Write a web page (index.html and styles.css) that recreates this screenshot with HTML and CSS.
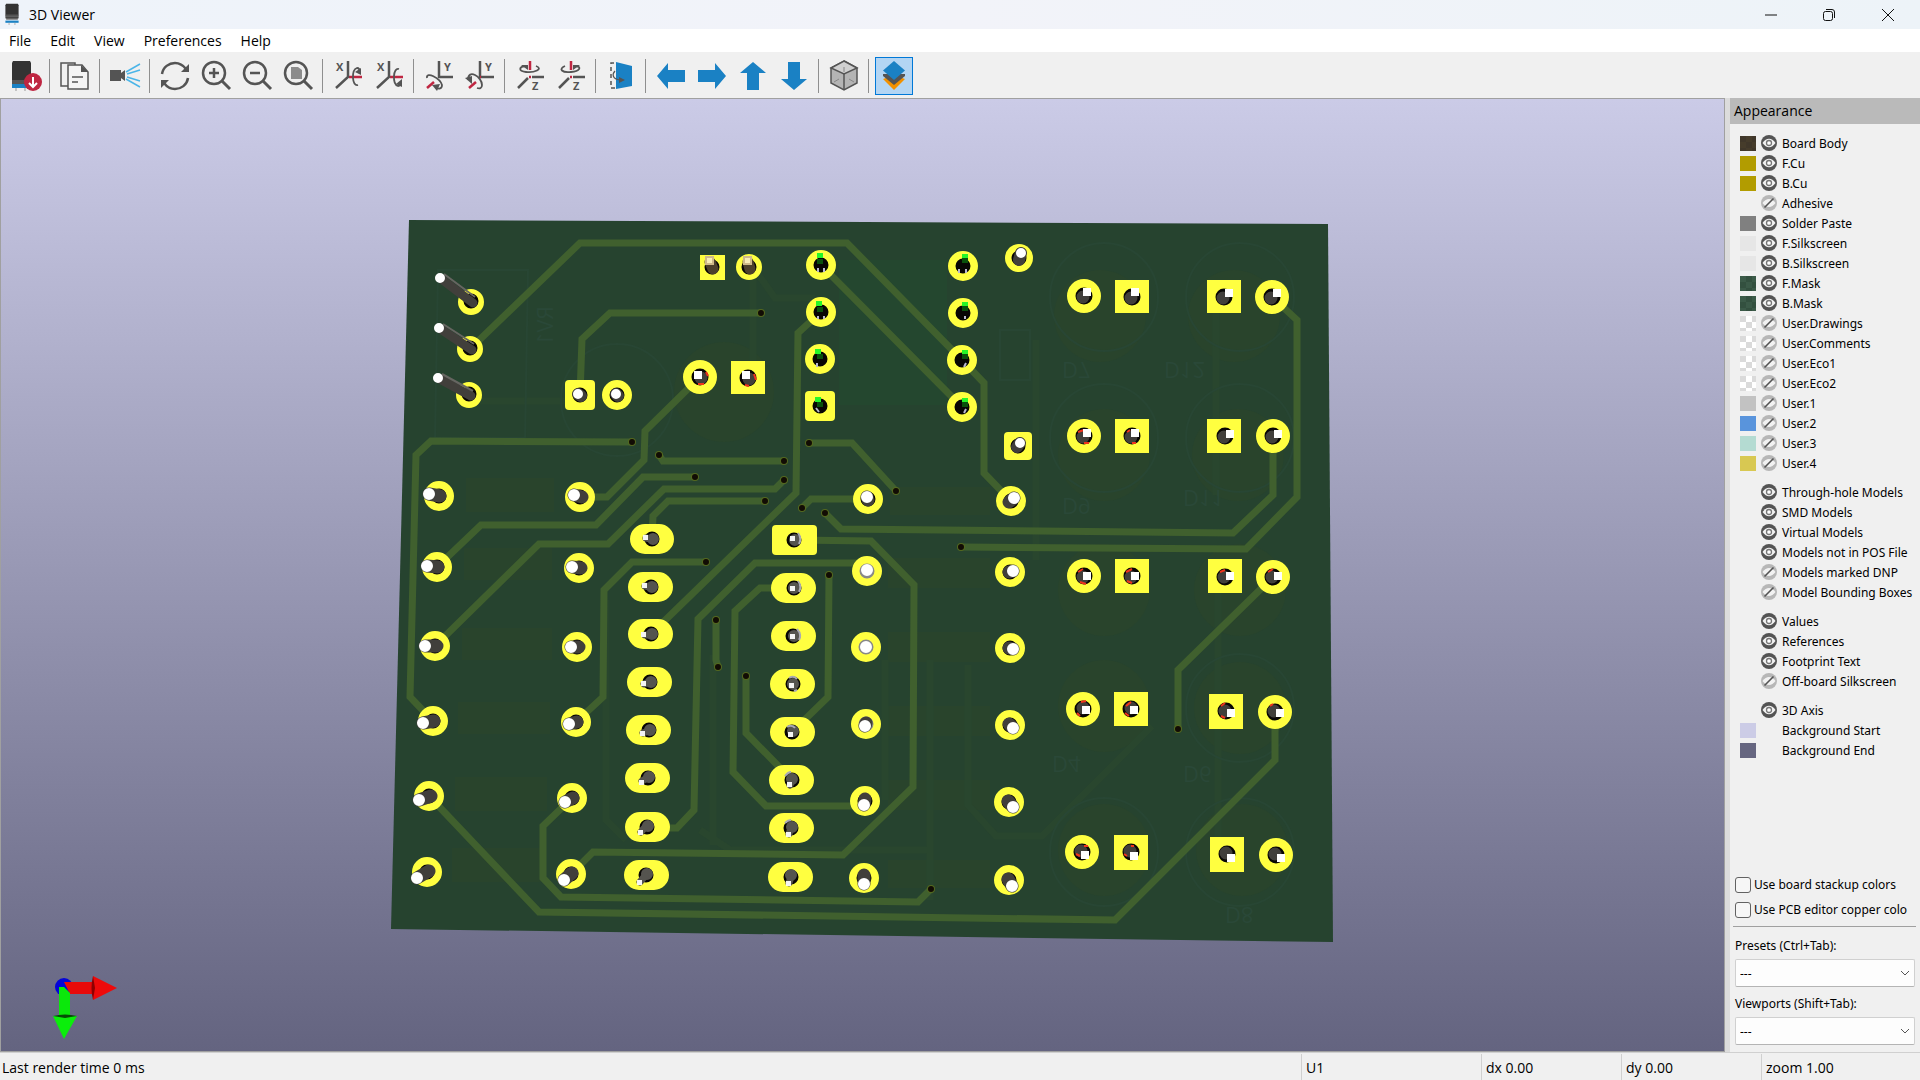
FILE: index.html
```html
<!DOCTYPE html>
<html lang="en">
<head>
<meta charset="utf-8">
<title>3D Viewer</title>
<link rel="stylesheet" href="styles.css">
</head>
<body>
<svg class="defs" aria-hidden="true">
  <symbol id="eye" viewBox="0 0 16 16"><circle cx="8" cy="8" r="8" fill="#545454"/><path d="M1.500 8Q4.500 3.800 8 3.800T14.500 8Q11.500 12.200 8 12.200T1.500 8Z" fill="#f2f2f2"/><circle cx="8" cy="8" r="2.500" fill="#fff" stroke="#777" stroke-width="1.300"/></symbol>
  <symbol id="off" viewBox="0 0 16 16"><circle cx="8" cy="8" r="8" fill="#b7b7b7"/><path d="M1.500 8Q4.500 4 8 4T14.500 8Q11.500 12 8 12T1.500 8Z" fill="#f2f2f2"/><path d="M3.500 12.500L12.500 3.500" stroke="#545454" stroke-width="1.600"/></symbol>
  <symbol id="chip" viewBox="0 0 20 30"><path d="M2 1h16l1 2v15H1V3z" fill="#333"/><path d="M1 16h18v1H1zM2 20h16v3H2z" fill="#777"/><path d="M1 18h18v3H1z" fill="#444"/><path d="M1 24h18v3H1z" fill="#1a81c4"/><path d="M6 27v3M14 27v3" stroke="#999"/></symbol>
</svg>

<header class="titlebar">
  <svg class="app-icon"><use href="#chip"/></svg>
  <h1>3D Viewer</h1>
  <div class="window-buttons">
    <button aria-label="Minimize"><svg viewBox="0 0 14 14"><path d="M1 7h12"/></svg></button>
    <button aria-label="Restore"><svg viewBox="0 0 14 14"><rect x="1.500" y="3.500" width="9" height="9" rx="2"/><path d="M4 1.500h6a2.500 2.500 0 0 1 2.500 2.500v6"/></svg></button>
    <button aria-label="Close"><svg viewBox="0 0 14 14"><path d="M1 1l12 12M13 1L1 13"/></svg></button>
  </div>
</header>

<nav class="menubar">
  <button>File</button><button>Edit</button><button>View</button><button>Preferences</button><button>Help</button>
</nav>

<div class="toolbar" role="toolbar">
  <button aria-label="Reload board"><svg viewBox="0 0 32 32"><path d="M4 1h17l1 2v17H3V3z" fill="#333"/><path d="M3 20h19v5H3z" fill="#555"/><path d="M3 24h16v4H3z" fill="#1a81c4"/><path d="M7 28v3M16 28v3" stroke="#999"/><circle cx="24" cy="22" r="9" fill="#bf2641"/><path d="M24 17v9m-4-3l4 4 4-4" fill="none" stroke="#fff" stroke-width="2"/></svg></button>
  <i class="sep"></i>
  <button aria-label="Copy image"><svg class="line" viewBox="0 0 32 32"><path d="M9 26H2V3h14v3" stroke-width="1.500"/><path d="M9 5h14l6 7v17H9z" fill="#f4f4f4" stroke-width="1.500"/><path d="M22 5l7 7h-7z" fill="#545454" stroke="none"/><path d="M13 17h11M13 22h6" stroke-width="1.500"/></svg></button>
  <i class="sep"></i>
  <button aria-label="Raytracing"><svg viewBox="0 0 32 32"><path d="M1 10h11v3l4-3v11l-4-3v3H1z" fill="#545454"/><path d="M17 12L31 4M18 14l13-4M18 17l13 4M17 19l14 8" stroke="#4bb5e8" stroke-width="1.500"/></svg></button>
  <i class="sep"></i>
  <button aria-label="Redraw"><svg class="line" viewBox="0 0 32 32"><path d="M3 14C4 7 10 3 16 3c5 0 8 2 11 6M29 18c-1 7-7 11-13 11-5 0-8-2-11-6"/><path d="M30 4v8h-8zM2 28v-8h8z" fill="#545454" stroke="none"/></svg></button>
  <button aria-label="Zoom in"><svg class="line" viewBox="0 0 32 32"><circle cx="14" cy="13" r="11"/><path d="M22 21l8 8" stroke-width="3"/><path d="M9 13h10M14 8v10"/></svg></button>
  <button aria-label="Zoom out"><svg class="line" viewBox="0 0 32 32"><circle cx="14" cy="13" r="11"/><path d="M22 21l8 8" stroke-width="3"/><path d="M9 13h10"/></svg></button>
  <button aria-label="Zoom to fit"><svg class="line" viewBox="0 0 32 32"><circle cx="14" cy="13" r="11"/><path d="M22 21l8 8" stroke-width="3"/><path d="M9 7h7l4 3v9H9z" fill="#8c8c8c" stroke="none"/></svg></button>
  <i class="sep"></i>
  <button aria-label="Rotate X clockwise"><svg class="line" viewBox="0 0 32 32"><path d="M17 17h13" stroke="#bf2641"/><path d="M16 1v16L4 28" /><path d="M26 25c-6 2-7-15-1-17 3 0 3 3 3 5" stroke-width="1.800"/><path d="M29 8v7l-6-3z" fill="#545454" stroke="none"/><text x="4" y="11">X</text></svg></button>
  <button aria-label="Rotate X counterclockwise"><svg class="line" viewBox="0 0 32 32"><path d="M17 17h13" stroke="#bf2641"/><path d="M16 1v16L4 28" /><path d="M26 9c-6-2-7 15-1 17 3 0 3-3 3-5" stroke-width="1.800"/><path d="M29 27v-8l-6 5z" fill="#545454" stroke="none"/><text x="4" y="11">X</text></svg></button>
  <i class="sep"></i>
  <button aria-label="Rotate Y clockwise"><svg class="line" viewBox="0 0 32 32"><path d="M11 22l-7 6" stroke="#bf2641"/><path d="M16 1v16h14"/><path d="M4 18c-1-7 13 0 15 7 0 4-3 4-6 3" stroke-width="1.800"/><path d="M9 25l8-1-3 7z" fill="#545454" stroke="none"/><text x="21" y="11">Y</text></svg></button>
  <button aria-label="Rotate Y counterclockwise"><svg class="line" viewBox="0 0 32 32"><path d="M12 22L5 28" stroke="#bf2641"/><path d="M16 1v16h14"/><path d="M16 17h1" stroke="#bf2641"/><path d="M4 20c0-12 14-3 14 5 0 3-2 4-5 3" stroke-width="1.800"/><path d="M1 18l7-2 0 8z" fill="#545454" stroke="none"/><text x="21" y="11">Y</text></svg></button>
  <i class="sep"></i>
  <button aria-label="Rotate Z clockwise"><svg class="line" viewBox="0 0 32 32"><path d="M16 1v9M15 17h2" stroke="#bf2641"/><path d="M18 17h12M14 18L4 28"/><path d="M11 6c-6 1-7 5 1 6s18-3 10-6" stroke-width="1.800"/><path d="M7 5h7v5z" fill="#545454" stroke="none"/><text x="18" y="30">Z</text></svg></button>
  <button aria-label="Rotate Z counterclockwise"><svg class="line" viewBox="0 0 32 32"><path d="M16 1v9M15 17h2" stroke="#bf2641"/><path d="M18 17h12M14 18L4 28"/><path d="M10 6c-7 3-3 7 6 6s11-5 5-6" stroke-width="1.800"/><path d="M25 5h-7v5z" fill="#545454" stroke="none"/><text x="18" y="30">Z</text></svg></button>
  <i class="sep"></i>
  <button aria-label="Flip board"><svg class="line" viewBox="0 0 32 32"><path d="M11 2l16 4v20l-16 3z" fill="#1a81c4" stroke="none"/><path d="M9 3H6v25h4" stroke-width="1.500" stroke-dasharray="4 3"/><path d="M10 11c-3 3-3 8 5 9" stroke-width="1.200"/><path d="M14 17l6 3-6 3z" fill="#545454" stroke="none"/></svg></button>
  <i class="sep"></i>
  <button aria-label="Move left"><svg class="arrow" viewBox="0 0 32 32"><path d="M2 16L13 3v7h17v12H13v7z"/></svg></button>
  <button aria-label="Move right"><svg class="arrow" viewBox="0 0 32 32"><path d="M30 16L19 3v7H2v12h17v7z"/></svg></button>
  <button aria-label="Move up"><svg class="arrow" viewBox="0 0 32 32"><path d="M16 2L3 13h7v17h12V13h7z"/></svg></button>
  <button aria-label="Move down"><svg class="arrow" viewBox="0 0 32 32"><path d="M16 30L3 19h7V2h12v17h7z"/></svg></button>
  <i class="sep"></i>
  <button aria-label="Orthographic projection"><svg class="line" viewBox="0 0 32 32"><path d="M16 1l13 7v15l-13 7-13-7V8z" fill="#b4b4b4" stroke-width="1.500"/><path d="M16 1l13 7-13 6L3 8z" fill="#d0d0d0" stroke-width="1.500"/><path d="M16 14v16" stroke-width="1.500"/><path d="M16 7v5M6 22l5-3M26 22l-5-3" stroke="#888" stroke-width="1"/></svg></button>
  <i class="sep"></i>
  <button class="active" aria-label="Appearance panel" aria-pressed="true"><svg viewBox="0 0 32 32"><path d="M5 19l11-4 11 4-11 11z" fill="#f29100"/><path d="M5 14h22v2L16 25 5 16z" fill="#545454"/><path d="M16 1l11 9.500L16 20 5 10.500z" fill="#1a81c4"/></svg></button>
</div>

<main class="workspace">
  <section class="viewport" aria-label="Board view">
    <svg class="board" viewBox="1 99 1723 952" role="img" aria-label="Printed circuit board">
      <path d="M409 220L1328 224 1333 942 391 929z" fill="#26432f"/>
      <path d="M839 260h108v145H839z" fill="#24472f"/>
      <g fill="#29442c">
        <circle cx="1100" cy="316" r="46"/><circle cx="1234" cy="316" r="46"/><circle cx="1104" cy="455" r="46"/><circle cx="1238" cy="455" r="46"/>
        <circle cx="1104" cy="590" r="46"/><circle cx="1240" cy="590" r="46"/><circle cx="1104" cy="706" r="46"/><circle cx="1240" cy="708" r="46"/>
        <circle cx="1104" cy="850" r="46"/><circle cx="1242" cy="850" r="46"/><circle cx="724" cy="392" r="50"/>
        <path d="M466 478h88v34h-88zM464 548h88v32h-88zM462 628h90v32h-90zM458 702h92v32h-92zM455 777h92v34h-92zM452 848h92v34h-92z"/>
        <path d="M890 487h100v28H890zM888 558h102v30H888zM888 632h102v30H888zM888 706h102v30H888zM888 780h102v30H888zM888 860h102v28H888z"/>
      </g>
      <g fill="none" stroke="#29462e" stroke-width="7">
        <path d="M753 270v100M755 270l20 28h40M480 401h90M1036 340v220M1216 310v185M1218 590v250M930 660v240M968 665v140l28 31h46l110-110M885 660v140M713 655v190M606 600v220l20 20M700 830l30 20h200"/>
      </g>
      <g fill="none" stroke="#284634" stroke-width="2">
        <circle cx="617" cy="400" r="56"/><circle cx="1104" cy="297" r="54"/><circle cx="1240" cy="297" r="54"/><circle cx="1104" cy="438" r="54"/><circle cx="1240" cy="438" r="54"/><circle cx="1240" cy="708" r="54"/><circle cx="1240" cy="852" r="54"/><circle cx="1104" cy="852" r="54"/>
        <path d="M438 270h90l-3 168h-90zM1000 330h30v50h-30z"/>
      </g>
      <g class="silk" fill="#2a4838">
        <text transform="translate(553 306) rotate(90) scale(1 -1)">RV1</text>
        <text transform="translate(1062 362) scale(1 -1)">D7</text><text transform="translate(1164 362) scale(1 -1)">D12</text>
        <text transform="translate(1062 498) scale(1 -1)">D9</text><text transform="translate(1183 490) scale(1 -1)">D11</text>
        <text transform="translate(1052 756) scale(1 -1)">D4</text><text transform="translate(1183 766) scale(1 -1)">D6</text>
        <text transform="translate(1225 907) scale(1 -1)">D8</text>
      </g>
      <g fill="none" stroke="#40602e" stroke-width="7">
        <path d="M470 349L580 243 847 243 962 360 984 383 984 473 1011 501M821 265L962 407M761 313H610L582 339 580 395"/>
        <path d="M821 312L798 333 796 493 651 634M632 442L431 441 416 455 410 697 433 721M700 377L645 431 644 460 607 497H580M659 455L663 461H784"/>
        <path d="M695 477H643L596 525H481L437 567M784 480L775 489H664L608 544H539L435 646M765 501H668L653 516 652 539M706 562H632L604 590 603 697 576 722"/>
        <path d="M867 563H755L698 619 694 810 677 828H647M794 588H760L735 611 733 772 766 806H865M716 620V660L718 667M746 676V733L792 780M829 575L828 697 792 732"/>
        <path d="M794 540L871 541 914 585 913 787 843 855 593 852 571 874M572 798L543 826V878L561 897 918 902 931 889M429 796L539 912 1115 920 1275 760V712"/>
        <path d="M1272 297L1297 320V497L1246 549 961 547M1273 436V495L1233 533 841 529 825 513M802 508L811 499H868M809 443H852L896 491M1273 577L1178 670V729"/>
      </g>
      <g fill="none" stroke-linecap="round">
        <path d="M761 313h0M632 442h0M659 455h0M784 461h0M695 477h0M784 480h0M765 501h0M706 562h0M716 620h0M718 667h0M746 676h0M829 575h0M931 889h0M961 547h0M825 513h0M802 508h0M809 443h0M896 491h0M1178 729h0" stroke="#54681f" stroke-width="8"/>
        <path d="M761 313h0M632 442h0M659 455h0M784 461h0M695 477h0M784 480h0M765 501h0M706 562h0M716 620h0M718 667h0M746 676h0M829 575h0M931 889h0M961 547h0M825 513h0M802 508h0M809 443h0M896 491h0M1178 729h0" stroke="#120c04" stroke-width="6"/>
      </g>
      <g fill="none" stroke="#ffff40" stroke-linecap="round">
        <path stroke-width="30" d="M439 496h0M437 567h0M435 646h0M433 721h0M429 796h0M427 872h0M580 497h0M579 568h0M577 647h0M576 722h0M572 798h0M571 874h0M868 499h0M867 571h0M866 647h0M866 724h0M865 801h0M864 878h0M1011 501h0M1010 572h0M1010 648h0M1010 725h0M1009 802h0M1009 880h0M821 265h0M821 312h0M820 359h0M963 266h0M963 313h0M962 360h0M962 407h0M617 395h0"/>
        <path stroke-width="30" d="M645 539h14M643 587h15M643 634h15M642 682h15M641 730h15M640 778h15M640 827h15M639 875h15M786 588h15M786 636h15M785 684h15M785 732h15M784 780h15M784 828h15M783 877h15"/>
        <path stroke-width="26" d="M471 302h0M470 349h0M469 395h0M749 267h0"/>
        <path stroke-width="28" d="M1019 258h0"/>
        <path stroke-width="34" d="M700 377h0M1084 296h0M1272 297h0M1084 436h0M1273 436h0M1084 576h0M1273 577h0M1083 709h0M1275 712h0M1082 852h0M1276 855h0"/>
      </g>
      <g fill="#ffff40">
        <path d="M700 255h25v25h-25zM731 361h34v33h-34zM1115 280h34v33h-34zM1207 280h34v33h-34zM1115 419h34v34h-34zM1207 419h34v34h-34zM1115 559h34v34h-34zM1208 559h34v34h-34zM1114 692h34v34h-34zM1209 694h34v35h-34zM1114 835h34v35h-34zM1210 837h34v35h-34z"/>
        <rect x="805" y="391" width="30" height="30" rx="4"/><rect x="565" y="380" width="30" height="30" rx="4"/><rect x="1004" y="432" width="28" height="28" rx="4"/><rect x="772" y="525" width="45" height="30" rx="4"/>
      </g>
      <g fill="none" stroke="#080604" stroke-linecap="round">
        <path stroke-width="15" d="M439 496h0M437 567h0M435 646h0M433 721h0M429 796h0M427 872h0M580 497h0M579 568h0M577 647h0M576 722h0M572 798h0M571 874h0M868 499h0M1011 501h0M1010 572h0M1010 648h0M1010 725h0M1009 802h0M1009 880h0M821 265h0M821 312h0M820 359h0M820 406h0M963 266h0M963 313h0M962 360h0M962 407h0M617 395h0M580 395h0M1019 258h0M1018 446h0M471 301h0M470 348h0M469 394h0M712 267h0M749 267h0M865 801h0M864 878h0"/>
        <path stroke-width="17" d="M700 377h0M748 378h0M1084 296h0M1132 297h0M1224 297h0M1272 297h0M1084 436h0M1132 436h0M1225 436h0M1273 436h0M1084 576h0M1132 576h0M1225 577h0M1273 577h0M1083 709h0M1131 709h0M1226 711h0M1275 712h0M1082 852h0M1131 852h0M1227 854h0M1276 855h0"/>
        <path stroke-width="15" d="M652 539h0M651 587h0M651 634h0M650 682h0M649 730h0M648 778h0M647 827h0M646 875h0M794 540h0M794 588h0M793 636h0M793 684h0M792 732h0M792 780h0M791 828h0M791 877h0"/>
        <path stroke="#888" stroke-width="15" d="M867 571h0M866 647h0M866 724h0"/>
      </g>
      <g fill="none" stroke="#413f3b" stroke-linecap="round">
        <path stroke-width="13" d="M440 496L429 494M438 567L427 566M437 646L425 646M434 721L423 723M431 796L419 800M429 871L417 878M582 497L574 495M581 568L572 567M579 647L571 647M577 722L569 724M573 798L565 802M572 873L564 880M868 500L867 497M865 799L864 805M864 875L864 884M1009 502L1014 498M1009 572L1013 571M1009 648L1013 649M1009 724L1013 728M1008 801L1013 807M1008 879L1012 886M866 723L865 726"/>
        <path stroke-width="12" d="M581 396L578 394M618 396L616 394M1019 260L1021 253M1017 447L1020 443"/>
        <path stroke-width="9" d="M473 303L440 278M472 350L439 328M471 396L438 378"/>
        <path stroke-width="13" d="M701 378h0M749 379h0M1083 297h0M1131 298h0M1223 298h0M1271 298h0M1083 437h0M1131 437h0M1224 437h0M1272 437h0M1083 577h0M1131 577h0M1224 577h0M1272 577h0M1083 708h0M1131 708h0M1225 711h0M1274 711h0M1081 851h0M1130 851h0M1226 853h0M1275 854h0"/>
      </g>
      <path fill="none" stroke="#f0331c" stroke-width="2" d="M1078 432l6-2M1084 443h5M1127 432l3-2M1132 443h4M1078 572l5-3M1080 582l6 2M1126 572l6-3M1127 581l5 2M1220 572l5-2M1268 572l5-3M1081 702l5-1M1077 713l3 3M1126 706l5-4M1125 713l4 3M1221 706l4-3M1221 716l4 2M1270 706l3-2M1084 846h4M1076 854l4 2M1131 846h3M1124 854l3 2M706 372l2 4M698 384l6 0M754 374l2 6M745 385l4 1"/>
      <g fill="none" stroke="#55544f" stroke-linecap="round">
        <path stroke-width="12" d="M653 539h0M652 587h0M652 634h0M651 682h0M650 730h0M649 777h0M648 826h0M647 874h0M795 540h0M794 588h0M794 636h0M793 684h0M793 731h0M792 779h0M792 827h0M791 875h0"/>
        <path stroke-width="7" d="M651 539L646 538M650 587L645 586M650 635L645 635M649 682L644 684M648 731L643 733M647 778L642 781M646 826L641 832M645 876L640 882M791 783L790 785M790 831L789 834M790 880L789 883"/>
      </g>
      <path fill="none" stroke="#a9a9b4" stroke-width="2" d="M798 533q4 5 1 11M798 581q4 5 1 11M797 629q5 5 2 11M789 678q5-3 8 1M797 690l-3 1M787 727q5-3 8 1M785 776q3-4 6-4M785 823q3-3 6-3"/>
      <path fill="none" stroke="#666561" stroke-width="2" d="M475 297L444 274M474 344L443 324M473 391L442 374"/>
      <g fill="none" stroke="#fff" stroke-linecap="round">
        <path stroke-width="12" d="M429 494h0M427 566h0M425 646h0M423 723h0M419 800h0M417 878h0M574 495h0M572 567h0M571 647h0M569 724h0M565 802h0M564 880h0M867 497h0M867 570h0M866 647h0M865 726h0M864 805h0M864 884h0M1014 498h0M1013 571h0M1013 649h0M1013 728h0M1013 807h0M1012 886h0"/>
        <path stroke-width="10" d="M578 394h0M616 394h0M1021 253h0M1020 443h0M440 278h0M439 328h0M438 378h0"/>
      </g>
      <path fill="#fff" d="M694 371h8v8h-8zM742 371h8v8h-8zM1083 288h8v8h-8zM1131 288h8v8h-8zM1225 289h8v8h-8zM1273 289h8v8h-8zM1083 429h8v8h-8zM1131 429h8v8h-8zM1226 430h8v8h-8zM1274 430h8v8h-8zM1083 572h8v8h-8zM1131 572h8v8h-8zM1226 572h8v8h-8zM1274 572h8v8h-8zM1082 706h8v8h-8zM1130 706h8v8h-8zM1227 709h8v8h-8zM1276 709h8v8h-8zM1081 851h8v8h-8zM1130 852h8v8h-8zM1227 854h8v8h-8zM1277 854h8v8h-8z"/>
      <path fill="#f4f4f4" d="M643 535h5v5h-5zM642 583h5v5h-5zM641 632h5v5h-5zM641 681h5v5h-5zM640 731h5v5h-5zM639 780h5v5h-5zM638 830h5v5h-5zM637 880h5v5h-5zM790 536h5v5h-5zM790 586h5v5h-5zM790 634h5v5h-5zM789 683h5v5h-5zM788 732h5v5h-5zM787 782h5v5h-5zM786 832h5v5h-5zM786 881h5v5h-5z"/>
      <path fill="none" stroke="#4d402c" stroke-width="11" stroke-linecap="round" d="M710 262l3 7M748 262l2 7"/>
      <path fill="#cfb98a" d="M705 256h9v9h-9zM743 256h9v9h-9z"/><path fill="#f8ecb8" d="M707 258h5v5h-5zM745 258h5v5h-5z"/>
      <path fill="#0a510c" d="M817 259h6v5h-6zM817 307h6v5h-6zM817 354h6v5h-6zM817 402h6v5h-6zM962 258h6v5h-6zM962 306h6v5h-6zM962 354h6v5h-6zM962 402h6v5h-6z"/>
      <path fill="#26f528" d="M817 253h6v5h-6zM816 301h6v5h-6zM815 349h6v5h-6zM815 397h6v5h-6zM962 254h6v4h-6zM962 302h6v4h-6zM962 350h6v4h-6zM962 398h6v4h-6z"/>
      <path fill="none" stroke="#b9b9d0" stroke-width="2" d="M818 268v4M824 268v4M818 316v3M824 316v3M817 363v4M816 408l3 4M959 269v4M966 269v4M965 316v3M966 363l-2 4M966 409l-2 4"/>
    </svg>
    <svg class="axes" viewBox="0 0 120 80" aria-hidden="true">
      <circle cx="63" cy="16" r="9" fill="#0505d8"/>
      <path d="M63 11h31v12H69z" fill="#e80a0a"/><path d="M92 5l24 12-24 12z" fill="#ee0a0a"/><path d="M92 5q-3 12 0 24l2-12z" fill="#8e0000"/>
      <path d="M58 16h5l6 6v24H58z" fill="#0be80b"/><path d="M52 45h24L63 68z" fill="#0bee0b"/><path d="M52 45q12-3 24 0l-12 2z" fill="#064d06"/>
    </svg>
  </section>

  <aside class="panel">
    <h2>Appearance</h2>
    <div class="layers">
      <div class="group">
        <div class="row"><button class="swatch body" aria-label="Board Body color"></button><label><span class="vis"><input type="checkbox" checked><svg><use href="#eye"/></svg></span>Board Body</label></div>
        <div class="row"><button class="swatch copper" aria-label="F.Cu color"></button><label><span class="vis"><input type="checkbox" checked><svg><use href="#eye"/></svg></span>F.Cu</label></div>
        <div class="row"><button class="swatch copper" aria-label="B.Cu color"></button><label><span class="vis"><input type="checkbox" checked><svg><use href="#eye"/></svg></span>B.Cu</label></div>
        <div class="row"><label><span class="vis"><input type="checkbox"><svg><use href="#off"/></svg></span>Adhesive</label></div>
        <div class="row"><button class="swatch paste" aria-label="Solder Paste color"></button><label><span class="vis"><input type="checkbox" checked><svg><use href="#eye"/></svg></span>Solder Paste</label></div>
        <div class="row"><button class="swatch silkscreen" aria-label="F.Silkscreen color"></button><label><span class="vis"><input type="checkbox" checked><svg><use href="#eye"/></svg></span>F.Silkscreen</label></div>
        <div class="row"><button class="swatch silkscreen" aria-label="B.Silkscreen color"></button><label><span class="vis"><input type="checkbox" checked><svg><use href="#eye"/></svg></span>B.Silkscreen</label></div>
        <div class="row"><button class="swatch mask" aria-label="F.Mask color"></button><label><span class="vis"><input type="checkbox" checked><svg><use href="#eye"/></svg></span>F.Mask</label></div>
        <div class="row"><button class="swatch mask" aria-label="B.Mask color"></button><label><span class="vis"><input type="checkbox" checked><svg><use href="#eye"/></svg></span>B.Mask</label></div>
        <div class="row"><button class="swatch clear" aria-label="User.Drawings color"></button><label><span class="vis"><input type="checkbox"><svg><use href="#off"/></svg></span>User.Drawings</label></div>
        <div class="row"><button class="swatch clear" aria-label="User.Comments color"></button><label><span class="vis"><input type="checkbox"><svg><use href="#off"/></svg></span>User.Comments</label></div>
        <div class="row"><button class="swatch clear" aria-label="User.Eco1 color"></button><label><span class="vis"><input type="checkbox"><svg><use href="#off"/></svg></span>User.Eco1</label></div>
        <div class="row"><button class="swatch clear" aria-label="User.Eco2 color"></button><label><span class="vis"><input type="checkbox"><svg><use href="#off"/></svg></span>User.Eco2</label></div>
        <div class="row"><button class="swatch user1" aria-label="User.1 color"></button><label><span class="vis"><input type="checkbox"><svg><use href="#off"/></svg></span>User.1</label></div>
        <div class="row"><button class="swatch user2" aria-label="User.2 color"></button><label><span class="vis"><input type="checkbox"><svg><use href="#off"/></svg></span>User.2</label></div>
        <div class="row"><button class="swatch user3" aria-label="User.3 color"></button><label><span class="vis"><input type="checkbox"><svg><use href="#off"/></svg></span>User.3</label></div>
        <div class="row"><button class="swatch user4" aria-label="User.4 color"></button><label><span class="vis"><input type="checkbox"><svg><use href="#off"/></svg></span>User.4</label></div>
      </div>
      <div class="group">
        <div class="row"><label><span class="vis"><input type="checkbox" checked><svg><use href="#eye"/></svg></span>Through-hole Models</label></div>
        <div class="row"><label><span class="vis"><input type="checkbox" checked><svg><use href="#eye"/></svg></span>SMD Models</label></div>
        <div class="row"><label><span class="vis"><input type="checkbox" checked><svg><use href="#eye"/></svg></span>Virtual Models</label></div>
        <div class="row"><label><span class="vis"><input type="checkbox" checked><svg><use href="#eye"/></svg></span>Models not in POS File</label></div>
        <div class="row"><label><span class="vis"><input type="checkbox"><svg><use href="#off"/></svg></span>Models marked DNP</label></div>
        <div class="row"><label><span class="vis"><input type="checkbox"><svg><use href="#off"/></svg></span>Model Bounding Boxes</label></div>
      </div>
      <div class="group">
        <div class="row"><label><span class="vis"><input type="checkbox" checked><svg><use href="#eye"/></svg></span>Values</label></div>
        <div class="row"><label><span class="vis"><input type="checkbox" checked><svg><use href="#eye"/></svg></span>References</label></div>
        <div class="row"><label><span class="vis"><input type="checkbox" checked><svg><use href="#eye"/></svg></span>Footprint Text</label></div>
        <div class="row"><label><span class="vis"><input type="checkbox"><svg><use href="#off"/></svg></span>Off-board Silkscreen</label></div>
      </div>
      <div class="group">
        <div class="row"><label><span class="vis"><input type="checkbox" checked><svg><use href="#eye"/></svg></span>3D Axis</label></div>
        <div class="row"><button class="swatch bg-start" aria-labelledby="bgs-l"></button><span class="name" id="bgs-l">Background Start</span></div>
        <div class="row"><button class="swatch bg-end" aria-labelledby="bge-l"></button><span class="name" id="bge-l">Background End</span></div>
      </div>
    </div>
    <div class="options">
      <label class="check"><input type="checkbox">Use board stackup colors</label>
      <label class="check"><input type="checkbox">Use PCB editor copper colo</label>
    </div>
    <div class="views">
      <label for="presets">Presets (Ctrl+Tab):</label>
      <div class="combo"><select id="presets"><option>---</option></select><svg viewBox="0 0 10 6"><path d="M1 1l4 4 4-4"/></svg></div>
      <label for="viewports">Viewports (Shift+Tab):</label>
      <div class="combo"><select id="viewports"><option>---</option></select><svg viewBox="0 0 10 6"><path d="M1 1l4 4 4-4"/></svg></div>
    </div>
  </aside>
</main>

<footer class="status">
  <span>Last render time 0 ms</span><span>U1</span><span>dx 0.00</span><span>dy 0.00</span><span>zoom 1.00</span>
</footer>
</body>
</html>
```

FILE: styles.css
```css
* { box-sizing: border-box; }
html, body { height: 100%; }
body {
  margin: 0;
  display: flex;
  flex-direction: column;
  background: #f0f0f0;
  color: #000;
  font-family: "Open Sans", "Noto Sans", sans-serif;
  font-size: 12px;
  overflow: hidden;
}
button { border: 0; padding: 0; background: none; color: inherit; font: inherit; }
.defs { display: none; }

.titlebar {
  flex: none;
  display: flex;
  align-items: center;
  height: 29px;
  padding-right: 2px;
  background: linear-gradient(90deg, #eef3fa, #f2f3f9 50%, #edf3f8);
}
.app-icon { width: 16px; height: 22px; margin: 0 9px 2px 4px; }
.titlebar h1 { margin: 0; font-size: 14px; font-weight: 400; }
.window-buttons { display: flex; margin-left: auto; }
.window-buttons button { width: 58px; height: 29px; display: grid; place-items: center; }
.window-buttons svg { width: 14px; height: 14px; fill: none; stroke: #111; }
.window-buttons button:last-child { width: 60px; }

.menubar { flex: none; display: flex; gap: 3px; height: 23px; background: #fff; font-size: 14px; padding: 0 1px; }
.menubar button { padding: 0 8px; line-height: 24px; }

.toolbar {
  flex: none;
  display: flex;
  align-items: center;
  gap: 3px;
  height: 46px;
  padding: 1px 6px 0;
}
.toolbar button { width: 38px; height: 38px; display: grid; place-items: center; border: 1px solid transparent; }
.toolbar .active { background: #b3d5f3; border-color: #0078d7; }
.toolbar svg { width: 32px; height: 32px; overflow: visible; }
.toolbar .sep { width: 6px; height: 34px; border-left: 1px solid #8f8f8f; margin-left: 2px; margin-right: -2px; }
.line { fill: none; stroke: #545454; stroke-width: 2.500px; }
.line text { fill: #545454; stroke: none; font: 700 11px "Open Sans", sans-serif; }
.arrow { fill: #1a81c4; }

.workspace { flex: 1; min-height: 0; display: flex; background: #dcdcdc; }
.viewport {
  flex: 1;
  min-width: 0;
  display: grid;
  border: 1px solid #a0a0a0;
  margin-right: 5px;
  background: linear-gradient(#cbcbe7, #646480);
}
.board, .axes { grid-area: 1 / 1; }
.board { width: 100%; height: 100%; min-height: 0; }
.axes { width: 120px; height: 80px; align-self: end; }
.silk { font: 22px "Open Sans", sans-serif; }

.panel {
  flex: none;
  width: 190px;
  display: flex;
  flex-direction: column;
  background: #f0f0f0;
  font-family: "Noto Sans", "Open Sans", sans-serif;
}
.panel h2 { margin: 0; padding: 0 4px; background: #bababa; font: 400 14px/26px "Open Sans", sans-serif; }
.layers { display: flex; flex-direction: column; gap: 9px; padding: 9px 0 0 10px; margin-right: 4px; overflow: hidden; }
.row { display: grid; grid-template-columns: 16px 1fr; column-gap: 5px; height: 20px; align-items: center; white-space: nowrap; }
.row label { grid-column: 2; display: flex; align-items: center; gap: 5px; min-width: 0; overflow: hidden; }
.name { padding-left: 21px; }
.vis { flex: none; display: grid; width: 16px; height: 16px; }
.vis > * { grid-area: 1 / 1; width: 16px; height: 16px; margin: 0; }
.vis input { appearance: none; }
.swatch { width: 16px; height: 15px; }
.body { background: conic-gradient(#463c2b 25%, #40372a 0 50%, #463c2b 0 75%, #40372a 0) 0 0 / 12px 12px; }
.copper { background: #b29c00; }
.paste { background: #808080; }
.silkscreen { background: #e6e6e6; }
.mask { background: conic-gradient(#33503f 25%, #3b5a48 0 50%, #33503f 0 75%, #3b5a48 0) 0 0 / 12px 12px; }
.clear { background: conic-gradient(#fff 25%, #dadada 0 50%, #fff 0 75%, #dadada 0) 0 0 / 12px 12px; }
.user1 { background: #c2c2c2; }
.user2 { background: #5994dc; }
.user3 { background: #b4dbd2; }
.user4 { background: #d8c852; }
.bg-start { background: #cccce6; }
.bg-end { background: #666680; }

.options { margin: auto 4px 0 3px; padding: 0 0 4px 2px; border-bottom: 1px solid #a0a0a0; }
.check { display: flex; align-items: center; gap: 3px; height: 25px; white-space: nowrap; }
.check input {
  flex: none;
  appearance: none;
  width: 16px;
  height: 16px;
  margin: 0;
  border: 1px solid #626262;
  border-radius: 3px;
  background: #f6f6f6;
}
.views { display: flex; flex-direction: column; padding: 3px 5px 6px; }
.views label { padding-top: 2px; line-height: 27px; }
.combo { display: grid; align-items: center; height: 28px; margin-bottom: 1px; }
.combo > * { grid-area: 1 / 1; }
.combo select {
  appearance: none;
  width: 100%;
  height: 28px;
  padding: 0 4px;
  border: 1px solid #d0d0d0;
  border-bottom-color: #b4b4b4;
  border-radius: 2px;
  background: #fdfdfd;
  color: #000;
  font: inherit;
}
.combo svg { justify-self: end; width: 10px; height: 6px; margin-right: 5px; fill: none; stroke: #555; pointer-events: none; }

.status {
  flex: none;
  display: grid;
  grid-template-columns: 1fr 180px 140px 140px 159px;
  height: 28px;
  padding: 1px 0;
  border-top: 1px solid #d0d0d0;
  font-size: 14px;
  line-height: 28px;
}
.status span { padding-left: 4px; border-left: 1px solid #d0d0d0; }
.status span:first-child { padding-left: 2px; border-left: 0; }
```
